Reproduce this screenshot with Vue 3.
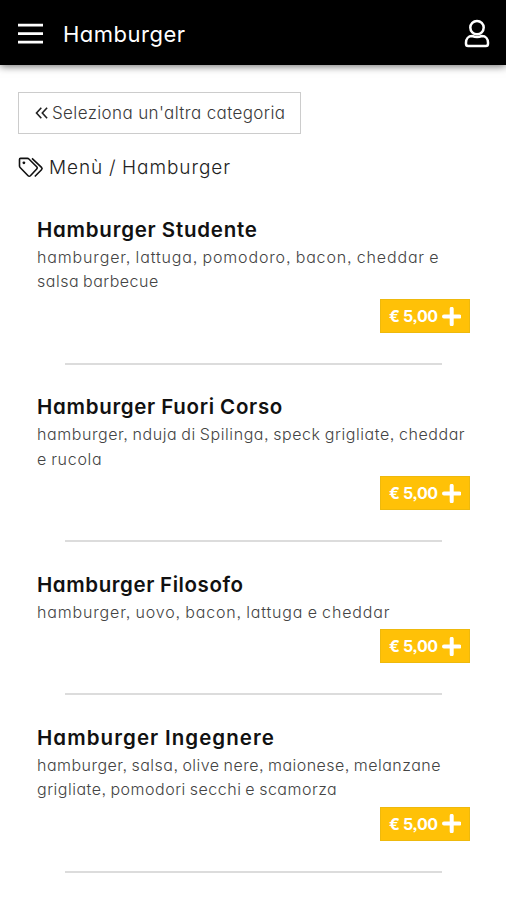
<script setup>
const items = [
  {
    name: 'Hamburger Studente', tracking: 0.76,
    lines: [
      { text: 'hamburger, lattuga, pomodoro, bacon, cheddar e', tracking: 0.85 },
      { text: 'salsa barbecue', tracking: 0.5 },
    ],
  },
  {
    name: 'Hamburger Fuori Corso', tracking: 0.7,
    lines: [
      { text: 'hamburger, nduja di Spilinga, speck grigliate, cheddar', tracking: 0.57 },
      { text: 'e rucola', tracking: 0.7 },
    ],
  },
  {
    name: 'Hamburger Filosofo', tracking: 0.58,
    lines: [{ text: 'hamburger, uovo, bacon, lattuga e cheddar', tracking: 0.84 }],
  },
  {
    name: 'Hamburger Ingegnere', tracking: 1.07,
    lines: [
      { text: 'hamburger, salsa, olive nere, maionese, melanzane', tracking: 0.48 },
      { text: 'grigliate, pomodori secchi e scamorza', tracking: 0.5 },
    ],
  },
]
</script>

<template>
  <div class="page">
    <header class="bar">
      <svg class="burger" viewBox="0 0 25 22" width="25" height="22">
        <path d="M0 2.1h25M0 10.6h25M0 19.1h25" stroke="#fff" stroke-width="2.9" />
      </svg>
      <h1>Hamburger</h1>
      <svg class="user" viewBox="0 0 26 30" width="26" height="30" fill="none" stroke="#fff" stroke-width="2.5">
        <circle cx="13" cy="8.6" r="6.7" />
        <path d="M8.2 17C4.200 17 2 20 2 23.600v1.200c0 1.500.8 2.300 2.100 2.300h17.800c1.300 0 2.100-.8 2.100-2.300v-1.200c0-3.600-2.200-6.600-6.200-6.600-3 1.200-6.600 1.200-9.600 0z" />
      </svg>
    </header>
    <main>
      <button class="back">
        <svg viewBox="0 0 13 12" width="13" height="12" fill="none" stroke="#222" stroke-width="1.6">
          <path d="M6.300.8 1.500 6l4.800 5.200M12.100.8 7.300 6l4.800 5.200" />
        </svg>
        <span>Seleziona un'altra categoria</span>
      </button>
      <div class="crumb">
        <svg viewBox="0 0 26 21" width="26" height="21" fill="none" stroke="#111" stroke-width="1.6" stroke-linejoin="round">
          <path d="M1.500 2.400v6.700c0 .6.200 1 .6 1.400l8 8.200c.7.700 1.600.700 2.300 0l6.300-6.700c.7-.7.7-1.600 0-2.300l-7.800-7.700c-.4-.4-.8-.6-1.400-.6H2.500c-.6 0-1 .4-1 1z" />
          <path d="M14 1.400l9.500 9c.8.800.8 1.600 0 2.400L16.800 19.500" />
          <circle cx="5.900" cy="5.800" r="1.400" fill="#111" stroke="none" />
        </svg>
        <span>Menù / Hamburger</span>
      </div>
      <article v-for="item in items" :key="item.name" class="item">
        <h2 :style="{ letterSpacing: item.tracking + 'px' }">{{ item.name }}</h2>
        <p v-for="line in item.lines" :key="line.text" :style="{ letterSpacing: line.tracking + 'px' }">{{ line.text }}</p>
        <button class="price">
          <span>€ 5,00</span>
          <svg viewBox="0 0 19 19" width="19" height="19"><path d="M9.700 1.800v15.400M2 9.500h15.400" stroke="#fff" stroke-width="4" stroke-linecap="round" /></svg>
        </button>
        <hr />
      </article>
    </main>
  </div>
</template>

<style>
body { margin: 0; background: #fff; overflow: hidden; }
</style>
<style scoped>
.page { height: 900px; overflow: hidden; background: #fff; color: #222; font-family: Inter, "Open Sans", sans-serif; font-feature-settings: "cv11", "ss03"; font-weight: 300; }
h1, h2, p, hr { margin: 0; }
svg { display: block; flex: none; }
button { font: inherit; font-feature-settings: inherit; color: inherit; box-sizing: border-box; border-radius: 0; }
.bar { height: 65px; box-sizing: border-box; background: #000; padding: 3px 16px 0 18px; display: flex; align-items: center; box-shadow: 0 1px 8px rgba(0, 0, 0, .6); }
.bar h1 { margin-left: 20px; flex: 1; color: #fff; font-size: 22px; font-weight: 400; letter-spacing: .5px; white-space: nowrap; }
main { padding: 27px 18px 0; }
.back { display: flex; align-items: center; gap: 4px; width: 283px; height: 42px; padding: 0 0 0 16px; background: #fff; border: 1px solid #ccc; font-size: 17px; letter-spacing: .37px; white-space: nowrap; color: #3a3a3a; }
.crumb { display: flex; align-items: center; gap: 5px; height: 30px; margin: 18px 0 33px; font-size: 19px; letter-spacing: .93px; word-spacing: -.6px; white-space: nowrap; }
.item { padding: 0 18px 0 19px; display: flex; flex-direction: column; margin-bottom: 27.400px; }
h2 { font-size: 20.500px; line-height: 30px; font-weight: 600; word-spacing: -.6px; color: #111; white-space: nowrap; }
p { font-size: 16px; line-height: 24.400px; word-spacing: -1px; color: #444; white-space: nowrap; }
.price { align-self: flex-end; width: 90px; height: 34px; margin-top: 5.200px; padding: 0 0 0 8px; display: flex; align-items: center; gap: 4px; border: 1px solid #eeb90d; background: #ffc107; color: #fff; font-size: 16px; font-weight: 700; letter-spacing: -.4px; white-space: nowrap; }
hr { border: 0; height: 2px; background: #dcdcdc; margin: 30px 28px 0 28px; }
</style>
